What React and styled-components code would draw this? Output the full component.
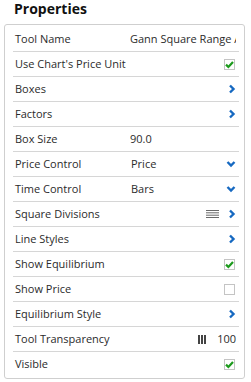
import React from 'react'
import styled, { createGlobalStyle } from 'styled-components'

const GlobalStyle = createGlobalStyle`
  body {
    margin: 0;
    background: #fff;
    font-family: "Open Sans", "DejaVu Sans", sans-serif;
    color: #2b2b2b;
  }
`

const ChevronRight = () => (
  <svg width="8" height="10" viewBox="0 0 8 10">
    <path d="M2 1.5 L5.5 5 L2 8.5" fill="none" stroke="#1669c1" strokeWidth="2.4" />
  </svg>
)

const ChevronDown = () => (
  <svg width="10" height="8" viewBox="0 0 10 8">
    <path d="M1.5 2 L5 5.5 L8.5 2" fill="none" stroke="#1669c1" strokeWidth="2.4" />
  </svg>
)

const Check = ({ checked }) => (
  <CheckBox>
    {checked && (
      <svg width="9" height="9" viewBox="0 0 9 9">
        <path d="M1 4.6 L3.4 7 L8 2" fill="none" stroke="#1c9a1c" strokeWidth="2.2" />
      </svg>
    )}
  </CheckBox>
)

const LinesIcon = () => (
  <svg width="13" height="9" viewBox="0 0 13 9">
    {[0.5, 2.8, 5.2, 7.5].map((y) => (
      <line key={y} x1="0" x2="13" y1={y} y2={y} stroke="#6a6a6a" strokeWidth="1" />
    ))}
  </svg>
)

const BarsIcon = () => (
  <svg width="8" height="9" viewBox="0 0 8 9">
    <rect x="0" y="0" width="2" height="9" fill="#444" />
    <rect x="3" y="0" width="2" height="9" fill="#444" />
    <rect x="6" y="0" width="2" height="9" fill="#444" />
  </svg>
)

const rows = [
  { label: 'Tool Name', value: 'Gann Square Range Analysis' },
  { label: "Use Chart's Price Unit", check: true },
  { label: 'Boxes', right: 'chevron' },
  { label: 'Factors', right: 'chevron' },
  { label: 'Box Size', value: '90.0' },
  { label: 'Price Control', value: 'Price', right: 'down', pad: true },
  { label: 'Time Control', value: 'Bars', right: 'down', pad: true },
  { label: 'Square Divisions', right: 'lines' },
  { label: 'Line Styles', right: 'chevron' },
  { label: 'Show Equilibrium', check: true },
  { label: 'Show Price', check: false },
  { label: 'Equilibrium Style', right: 'chevron' },
  { label: 'Tool Transparency', right: 'transparency' },
  { label: 'Visible', check: true },
]

const renderRight = (row) => {
  if (row.check !== undefined) return <Check checked={row.check} />
  if (row.right === 'chevron') return <ChevronRight />
  if (row.right === 'down') return <ChevronDown />
  if (row.right === 'lines')
    return (
      <>
        <LinesIcon />
        <ChevronRight />
      </>
    )
  if (row.right === 'transparency')
    return (
      <>
        <BarsIcon />
        <Number>100</Number>
      </>
    )
  return null
}

const App = () => {
  return (
    <>
      <GlobalStyle />
      <Title>Properties</Title>
      <Panel>
        {rows.map((row, i) => (
          <Row key={i}>
            <Label>{row.label}</Label>
            <Value $pad={row.pad}>{row.value}</Value>
            <Right>{renderRight(row)}</Right>
          </Row>
        ))}
      </Panel>
    </>
  )
}

export default App

const Title = styled.h1`
  margin: 0 0 7px 0;
  padding: 1px 0 0 14px;
  font-size: 14px;
  line-height: 16px;
  font-weight: 700;
  color: #111;
`

const Panel = styled.div`
  margin-left: 4px;
  width: 241px;
  box-sizing: border-box;
  border: 1px solid #cfcfcf;
  border-radius: 3px;
  padding: 2px 5px 2px 8px;
`

const Row = styled.div`
  display: flex;
  align-items: center;
  height: 25px;
  box-sizing: border-box;
  padding: 0 2px 0 2px;
  border-bottom: 1px solid #d6d6d6;
  font-size: 11px;
  line-height: 24px;
  overflow: hidden;

  &:last-child {
    border-bottom: none;
    height: 24px;
  }
`

const Label = styled.div`
  flex: 0 0 115px;
  white-space: nowrap;
`

const Value = styled.div`
  flex: 1;
  min-width: 0;
  white-space: nowrap;
  overflow: hidden;
  padding-left: ${(p) => (p.$pad ? '1px' : '0')};
`

const Right = styled.div`
  display: flex;
  align-items: center;
  gap: 9px;
  flex: 0 0 auto;
  padding-right: 1px;
`

const CheckBox = styled.div`
  width: 9px;
  height: 9px;
  border: 1px solid #c4c4c4;
  display: flex;
  align-items: center;
  justify-content: center;
  margin-right: 1px;
`

const Number = styled.span`
  margin-left: 2px;
`
